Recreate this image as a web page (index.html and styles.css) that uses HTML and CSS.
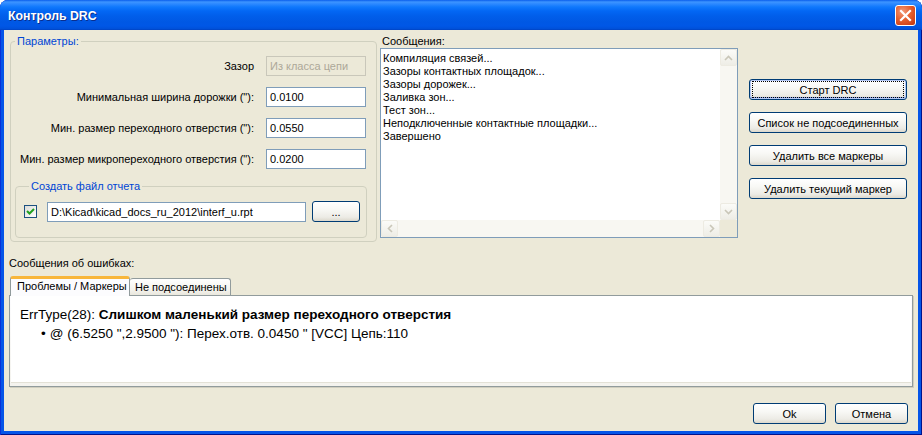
FILE: index.html
```html
<!DOCTYPE html>
<html lang="ru">
<head>
<meta charset="utf-8">
<title>Контроль DRC</title>
<link rel="stylesheet" href="styles.css">
</head>
<body>
<div class="window">
  <div class="titlebar">
    <span class="title">Контроль DRC</span>
    <span class="close"><svg width="13" height="13" viewBox="0 0 13 13"><path d="M2 2 L11 11 M11 2 L2 11" stroke="#fff" stroke-width="2.2" stroke-linecap="square"/></svg></span>
  </div>
  <div class="client">
    <div class="top">
      <fieldset class="group params">
        <legend>Параметры:</legend>
        <div class="row"><span class="lbl">Зазор</span><div class="field disabled">Из класса цепи</div></div>
        <div class="row"><span class="lbl">Минимальная ширина дорожки (&quot;):</span><div class="field">0.0100</div></div>
        <div class="row"><span class="lbl">Мин. размер переходного отверстия (&quot;):</span><div class="field">0.0550</div></div>
        <div class="row"><span class="lbl">Мин. размер микропереходного отверстия (&quot;):</span><div class="field">0.0200</div></div>
        <fieldset class="group report">
          <legend>Создать файл отчета</legend>
          <div class="report-row">
            <span class="check"><svg width="11" height="11" viewBox="0 0 11 11"><path d="M2 5 L4.5 7.5 L9 3" fill="none" stroke="#21A121" stroke-width="2"/></svg></span>
            <div class="field path">D:\Kicad\kicad_docs_ru_2012\interf_u.rpt</div>
            <button class="btn dots">...</button>
          </div>
        </fieldset>
      </fieldset>

      <div class="messages">
        <div class="mlabel">Сообщения:</div>
        <div class="listbox">
          <div class="list-main">
            <div class="list-content">
              <div>Компиляция связей...</div>
              <div>Зазоры контактных площадок...</div>
              <div>Зазоры дорожек...</div>
              <div>Заливка зон...</div>
              <div>Тест зон...</div>
              <div>Неподключенные контактные площадки...</div>
              <div>Завершено</div>
            </div>
            <div class="vscroll">
              <span class="sbtn"><svg width="9" height="6" viewBox="0 0 9 6"><path d="M1 5 L4.5 1.5 L8 5" fill="none" stroke="#C9C6B8" stroke-width="1.6"/></svg></span>
              <span class="strack"></span>
              <span class="sbtn"><svg width="9" height="6" viewBox="0 0 9 6"><path d="M1 1 L4.5 4.5 L8 1" fill="none" stroke="#C9C6B8" stroke-width="1.6"/></svg></span>
            </div>
          </div>
          <div class="hscroll">
            <span class="sbtn"><svg width="6" height="9" viewBox="0 0 6 9"><path d="M5 1 L1.5 4.5 L5 8" fill="none" stroke="#C9C6B8" stroke-width="1.6"/></svg></span>
            <span class="strack"></span>
            <span class="sbtn"><svg width="6" height="9" viewBox="0 0 6 9"><path d="M1 1 L4.5 4.5 L1 8" fill="none" stroke="#C9C6B8" stroke-width="1.6"/></svg></span>
            <span class="corner"></span>
          </div>
        </div>
      </div>

      <div class="actions">
        <button class="btn wide default"><span class="focus">Старт DRC</span></button>
        <button class="btn wide">Список не подсоединенных</button>
        <button class="btn wide">Удалить все маркеры</button>
        <button class="btn wide">Удалить текущий маркер</button>
      </div>
    </div>

    <div class="errlabel">Сообщения об ошибках:</div>
    <div class="tabs">
      <div class="tab active">Проблемы / Маркеры</div>
      <div class="tab">Не подсоединены</div>
    </div>
    <div class="tabpanel">
      <div class="html">
        <div class="err-title">ErrType(28): <b>Слишком маленький размер переходного отверстия</b></div>
        <ul class="err-list">
          <li>@ (6.5250 &quot;,2.9500 &quot;): Перех.отв. 0.0450 &quot; [VCC] Цепь:110</li>
        </ul>
      </div>
    </div>

    <div class="footer">
      <button class="btn foot">Ok</button>
      <button class="btn foot">Отмена</button>
    </div>
  </div>
</div>
</body>
</html>
```

FILE: styles.css
```css
* { box-sizing: border-box; }

html, body {
  margin: 0;
  padding: 0;
  background: #ffffff;
}

body {
  font-family: "Liberation Sans", Tahoma, Arial, sans-serif;
  font-size: 11px;
  color: #000;
}

.window {
  width: 922px;
  height: 435px;
  display: flex;
  flex-direction: column;
  background: #0555E8;
  border-radius: 8px 8px 0 0;
  overflow: hidden;
  box-shadow: inset 1px 0 #0831D9, inset -1px 0 #00138C, inset 0 -1px #00138C;
}

.titlebar {
  height: 30px;
  flex: none;
  display: flex;
  align-items: center;
  justify-content: space-between;
  padding: 0 6px 0 8px;
  background: linear-gradient(#0A5EEC 0px, #3D95FF 2px, #2B88FF 4px, #0F78FC 7px, #0367F4 11px, #015EEA 16px, #0058E4 22px, #0057E6 26px, #0050D8 29px, #003FBD 30px);
}

.title {
  color: #fff;
  font-weight: bold;
  font-size: 12.3px;
  text-shadow: 1px 1px 0 #0A2F8F;
  margin-top: 1px;
}

.close {
  width: 21px;
  height: 21px;
  display: flex;
  align-items: center;
  justify-content: center;
  border: 1px solid #fff;
  border-radius: 3px;
  background: radial-gradient(circle at 35% 30%, #F29A7A 0%, #E5602F 45%, #D1431A 80%, #B8360F 100%);
  margin-top: 1px;
}

.client {
  flex: 1;
  margin: 0 4px 4px 4px;
  background: #ECE9D8;
  display: flex;
  flex-direction: column;
}

.top {
  display: flex;
  align-items: flex-start;
  padding: 5px 0 0 6px;
}

/* group boxes */
.group {
  margin: 0;
  border: 1px solid #D0D0BF;
  border-radius: 4px;
  padding: 0;
  min-inline-size: 0;
}

.group legend {
  color: #0046D5;
  line-height: 13px;
  padding: 0 2px;
  margin-left: 4px;
}

.params {
  width: 367px;
  flex: none;
  padding: 8px 9px 3px 0;
}

.row {
  display: flex;
  align-items: center;
  height: 20px;
  margin-bottom: 11px;
  gap: 12px;
}

.lbl {
  width: 243px;
  text-align: right;
  white-space: nowrap;
}

.field {
  height: 20px;
  border: 1px solid #7F9DB9;
  background: #fff;
  padding: 0 3px;
  line-height: 18px;
  white-space: nowrap;
  overflow: hidden;
}

.row .field { width: 100px; }

.field.disabled {
  background: #ECE9D8;
  border-color: #C9C7BA;
  color: #ACA899;
}

.report {
  margin: 0 0 0 4px;
  padding: 8px 6px 15px 8px;
}

.report legend { margin-left: 5px; }

.report-row {
  display: flex;
  align-items: center;
  height: 21px;
}

.check {
  width: 13px;
  height: 13px;
  border: 1px solid #1C5180;
  background: linear-gradient(135deg, #DCDCD7, #FFFFFF);
  display: flex;
  align-items: center;
  justify-content: center;
  margin-right: 10px;
}

.field.path {
  width: 260px;
  margin-right: 6px;
}

/* buttons */
.btn {
  font: inherit;
  color: #000;
  height: 21px;
  border: 1px solid #003C74;
  border-radius: 3px;
  background: linear-gradient(#FFFFFF 0%, #F8F8F5 40%, #ECEBE5 80%, #DCD8CC 100%);
  padding: 0;
  display: flex;
  align-items: center;
  justify-content: center;
  white-space: nowrap;
}

.btn.dots {
  width: 48px;
  height: 21px;
}

.btn.wide {
  width: 158px;
}

.btn.default {
  box-shadow: inset 0 0 0 1px #B4C8F6, inset 0 -1px 0 1px #8CA6E8;
}

.focus {
  display: flex;
  align-items: center;
  justify-content: center;
  width: 150px;
  height: 15px;
  outline: 1px dotted #000;
}

/* messages */
.messages {
  margin-left: 3px;
  width: 358px;
  flex: none;
}

.mlabel {
  line-height: 13px;
  padding-left: 2px;
}

.listbox {
  height: 190px;
  border: 1px solid #7F9DB9;
  background: #fff;
  display: flex;
  flex-direction: column;
}

.list-main {
  flex: 1;
  display: flex;
}

.list-content {
  flex: 1;
  padding: 3px 0 0 2px;
  line-height: 13px;
  white-space: nowrap;
}

.vscroll {
  width: 17px;
  display: flex;
  flex-direction: column;
  background: #F8F7F2;
}

.hscroll {
  height: 17px;
  display: flex;
  background: #F8F7F2;
}

.strack { flex: 1; }

.sbtn {
  width: 17px;
  height: 17px;
  flex: none;
  display: flex;
  align-items: center;
  justify-content: center;
  border: 1px solid #EDEBE2;
  border-radius: 2px;
  background: linear-gradient(#FBFBF8, #EEEDE6);
}

.corner {
  width: 17px;
  height: 17px;
  background: #ECE9D8;
}

/* actions */
.actions {
  margin: 44px 0 0 11px;
  display: flex;
  flex-direction: column;
  gap: 12px;
}

/* bottom */
.errlabel {
  margin: 15px 0 0 5px;
  line-height: 13px;
}

.tabs {
  display: flex;
  align-items: flex-end;
  margin: 6px 0 0 6px;
  height: 19px;
  position: relative;
  z-index: 1;
}

.tab {
  height: 17px;
  border: 1px solid #919B9C;
  border-bottom: none;
  border-radius: 3px 3px 0 0;
  background: linear-gradient(#FFFFFF, #F3F2EC 70%, #E9E7DD);
  padding: 0 5px;
  line-height: 16px;
  white-space: nowrap;
}

.tab.active {
  width: 120px;
  background: #FCFCFE;
  border-top: 3px solid #F8B63A;
  padding-left: 6px;
  line-height: 15px;
  margin-bottom: -1px;
  height: 20px;
}

.tab:not(.active) {
  width: 101px;
  border-left: none;
}

.tabpanel {
  margin: 0 5px 0 5px;
  height: 92px;
  border: 1px solid #919B9C;
  background: linear-gradient(#FCFCFE, #F4F3EE);
  padding: 0 1px 3px 1px;
  box-shadow: 1px 1px 0 #D0CEBF;
}

.html {
  height: 100%;
  background: #fff;
  padding: 9px 0 0 9px;
  border-bottom: 1px solid #E3E1D6;
}

.err-title {
  font-size: 13.5px;
  line-height: 19px;
}

.err-list {
  margin: 0;
  padding: 0 0 0 21px;
  font-size: 13.5px;
  line-height: 19px;
  list-style: none;
}

.err-list li::before {
  content: "•";
  margin-right: 4px;
}

.footer {
  margin-top: 16px;
  display: flex;
  justify-content: flex-end;
  gap: 9px;
  padding-right: 10px;
}

.btn.foot {
  width: 73px;
}
```
